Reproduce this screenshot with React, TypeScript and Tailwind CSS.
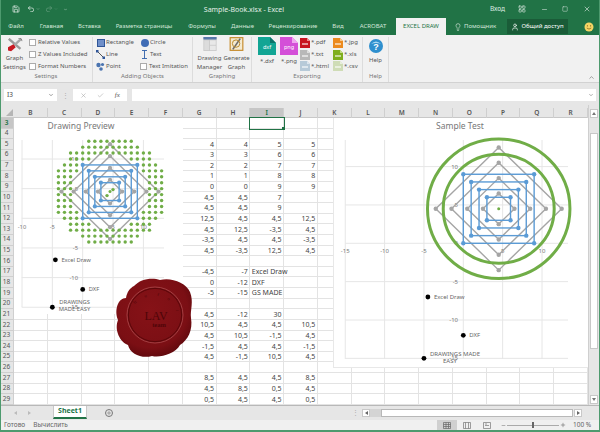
import { Save, Undo2, Redo2, X, Check, Minus, Square, Plus, Lightbulb, User, ChevronUp, ChevronDown, LayoutGrid } from "lucide-react";

const FONT = "font-['Noto_Sans','Open_Sans',sans-serif]";

const tabs = [
    { t: "Файл", c: "w-[32px]" },
    { t: "Главная", c: "w-[39px]" },
    { t: "Вставка", c: "w-[37px]" },
    { t: "Разметка страницы", c: "w-[72px]" },
    { t: "Формулы", c: "w-[44px]" },
    { t: "Данные", c: "w-[37px]" },
    { t: "Рецензирование", c: "w-[64px]" },
    { t: "Вид", c: "w-[26px]" },
    { t: "ACROBAT", c: "w-[44px]" },
];

const cols = ["B", "C", "D", "E", "F", "G", "H", "I", "J", "K", "L", "M", "N", "O", "P", "Q", "R"];

// rows 3..29, columns G H I J
const data: Record<number, string[]> = {
    5: ["4", "4", "5", "5"],
    6: ["3", "3", "6", "6"],
    7: ["2", "2", "7", "7"],
    8: ["1", "1", "8", "8"],
    9: ["0", "0", "9", "9"],
    10: ["4,5", "4,5", "7", ""],
    11: ["4,5", "4,5", "9", ""],
    12: ["12,5", "4,5", "4,5", "12,5"],
    13: ["4,5", "12,5", "-3,5", "4,5"],
    14: ["-3,5", "4,5", "4,5", "-3,5"],
    15: ["4,5", "-3,5", "12,5", "4,5"],
    17: ["-4,5", "-7", "Excel Draw", ""],
    18: ["0", "-12", "DXF", ""],
    19: ["-5", "-15", "GS MADE", ""],
    21: ["4,5", "-12", "30", ""],
    22: ["10,5", "4,5", "4,5", "10,5"],
    23: ["4,5", "10,5", "-1,5", "4,5"],
    24: ["-1,5", "4,5", "4,5", "-1,5"],
    25: ["4,5", "-1,5", "10,5", "4,5"],
    27: ["8,5", "4,5", "4,5", "8,5"],
    28: ["4,5", "8,5", "0,5", "4,5"],
    29: ["0,5", "4,5", "4,5", "0,5"],
};

const rows = Array.from({ length: 27 }, (_, i) => i + 3);

// preview chart plots the circles as whole-number points
const gridDots: [number, number][] = [];
for (let x = -5; x <= 14; x++) {
    for (let y = -5; y <= 14; y++) {
        const d = Math.hypot(x - 4.5, y - 4.5);
        if (d >= 6.5 && d <= 9.25) gridDots.push([x, y]);
    }
}

function CheckItem({ label }: { label: string }) {
    return (
        <div className="flex items-center gap-[2px] h-[12px]">
            <span className="w-[7px] h-[7px] bg-white border border-[#ababab] shrink-0" />
            <span className="text-[6px] text-[#555] whitespace-nowrap">{label}</span>
        </div>
    );
}

function IconItem({ icon, label }: { icon: React.ReactNode; label: string }) {
    return (
        <div className="flex items-center gap-[1px] h-[12px]">
            <span className="w-[9px] h-[9px] flex items-center justify-center shrink-0">{icon}</span>
            <span className="text-[6px] text-[#555] whitespace-nowrap">{label}</span>
        </div>
    );
}

function Group({ className, label, children }: { className: string; label: string; children: React.ReactNode }) {
    return (
        <div className={`flex flex-col h-full border-r border-[#dcdcdc] shrink-0 ${className}`}>
            <div className="flex-1 flex min-h-0">{children}</div>
            <div className="h-[10px] text-center text-[6px] leading-[8px] text-[#777]">{label}</div>
        </div>
    );
}

function FileBig({ color, fold, label }: { color: string; fold: string; label: string }) {
    return (
        <svg width="18" height="18" viewBox="0 0 18 18">
            <path d="M0 0H12L18 6V18H0Z" fill={color} />
            <path d="M12 0L18 6H12Z" fill={fold} />
            <text x="9" y="12" textAnchor="middle" fontSize="5.5" fill="#fff" fontFamily="Noto Sans">{label}</text>
        </svg>
    );
}

function FileSmall({ color, fold }: { color: string; fold: string }) {
    return (
        <svg width="10" height="10" viewBox="0 0 10 10">
            <path d="M0 0H7L10 3V10H0Z" fill={color} />
            <path d="M7 0L10 3H7Z" fill={fold} />
            <rect x="2" y="5" width="6" height="2" fill="#fff" opacity="0.55" />
        </svg>
    );
}

function ExportItem({ color, fold, label }: { color: string; fold: string; label: string }) {
    return (
        <div className="flex items-center gap-[1px] h-[12px]">
            <FileSmall color={color} fold={fold} />
            <span className="text-[6px] text-[#555] whitespace-nowrap">{label}</span>
        </div>
    );
}

type ChartProps = {
    left: number; top: number; width: number; height: number;
    x0: number; y0: number; sx: number; sy: number;
    xl: number; xr: number; yt: number; yb: number;
    gx: number[]; gy: number[];
    xLabelY: number; yLabelX: number;
    title: string; titleX: number;
    dots: boolean; fs: number; r: number;
};

function Chart(p: ChartProps) {
    const X = (v: number) => p.x0 + v * p.sx;
    const Y = (v: number) => p.y0 - v * p.sy;
    const squares = [4.5, 3.5, 2.5, 1.5];
    const diamonds = [8, 6, 4, 2];
    const cx = X(4.5);
    const cy = Y(4.5);
    return (
        <svg
            width={p.width}
            height={p.height}
            viewBox={`${p.left} ${p.top} ${p.width} ${p.height}`}
            className="block"
            fontFamily="Noto Sans"
        >
            <rect x={p.left} y={p.top} width={p.width} height={p.height} fill="#fff" />
            <text x={p.titleX} y={p.top + 10.5} textAnchor="middle" fontSize="8.5" fill="#777">{p.title}</text>
            {p.gx.map((v) => (
                <line key={v} x1={X(v)} x2={X(v)} y1={p.yt} y2={p.yb} stroke="#e6e6e6" strokeWidth="1" />
            ))}
            {p.gy.map((v) => (
                <line key={v} x1={p.xl} x2={p.xr} y1={Y(v)} y2={Y(v)} stroke="#e6e6e6" strokeWidth="1" />
            ))}
            {p.gx.filter((v) => v !== 0).map((v) => (
                <text key={v} x={X(v)} y={p.xLabelY} textAnchor="middle" fontSize={p.fs} fill="#777">{v}</text>
            ))}
            {p.gy.filter((v) => p.dots ? v !== 0 : true).map((v) => (
                <text key={v} x={p.yLabelX} y={Y(v) + 2} textAnchor="end" fontSize={p.fs} fill="#777">{v}</text>
            ))}
            {diamonds.map((d) => (
                <g key={d}>
                    <polygon
                        points={`${X(4.5)},${Y(4.5 + d)} ${X(4.5 + d)},${Y(4.5)} ${X(4.5)},${Y(4.5 - d)} ${X(4.5 - d)},${Y(4.5)}`}
                        fill="none" stroke="#a5a5a5" strokeWidth="1.4"
                    />
                    {[[0, d], [d, 0], [0, -d], [-d, 0]].map(([a, b]) => (
                        <circle key={`${a}_${b}`} cx={X(4.5 + a)} cy={Y(4.5 + b)} r={p.r} fill="#a5a5a5" />
                    ))}
                </g>
            ))}
            {squares.map((s) => (
                <g key={s}>
                    <rect x={X(4.5 - s)} y={Y(4.5 + s)} width={2 * s * p.sx} height={2 * s * p.sy} fill="none" stroke="#5b9bd5" strokeWidth="1.4" />
                    {[[-s, s], [s, s], [s, -s], [-s, -s]].map(([a, b]) => (
                        <circle key={`${a}_${b}`} cx={X(4.5 + a)} cy={Y(4.5 + b)} r={p.r} fill="#5b9bd5" />
                    ))}
                </g>
            ))}
            {p.dots ? (
                gridDots.map(([a, b]) => (
                    <circle key={`${a}_${b}`} cx={X(a)} cy={Y(b)} r="1.7" fill="#70ad47" />
                ))
            ) : (
                <>
                    <ellipse cx={cx} cy={cy} rx={9.05 * p.sx} ry={9.1 * p.sy} fill="none" stroke="#70ad47" strokeWidth="3" />
                    <ellipse cx={cx} cy={cy} rx={7.05 * p.sx} ry={7.1 * p.sy} fill="none" stroke="#70ad47" strokeWidth="3" />
                </>
            )}
            <circle cx={cx} cy={cy} r="1.5" fill="#70ad47" />
            {p.dots && <circle cx={cx - 3} cy={cy + 4} r="1.7" fill="#70ad47" />}
            {p.dots && <circle cx={cx + 3} cy={cy - 2} r="1.7" fill="#70ad47" />}
            <circle cx={X(-4.5)} cy={Y(-7)} r="2.4" fill="#000" />
            <circle cx={X(0)} cy={Y(-12)} r="2.4" fill="#000" />
            <circle cx={X(-5)} cy={Y(-15)} r="2.4" fill="#000" />
            <text x={X(-4.5) + 6} y={Y(-7) + 2} fontSize={p.fs} fill="#666">Excel Draw</text>
            <text x={X(0) + 6} y={Y(-12) + 2} fontSize={p.fs} fill="#666">DXF</text>
            {p.dots ? (
                <>
                    <text x={X(-5) + 7} y={Y(-15) - 3.5} fontSize={p.fs} fill="#666">DRAWINGS</text>
                    <text x={X(-5) + 6.5} y={Y(-15) + 4} fontSize={p.fs} fill="#666">MADE EASY</text>
                </>
            ) : (
                <>
                    <text x={X(-5) + 6} y={Y(-15) - 2} fontSize={p.fs} fill="#666">DRAWINGS MADE</text>
                    <text x={X(-5) + 26} y={Y(-15) + 5} textAnchor="middle" fontSize={p.fs} fill="#666">EASY</text>
                </>
            )}
        </svg>
    );
}

function Seal() {
    return (
        <svg width="80" height="86" viewBox="114 275 80 86" className="block" fontFamily="Liberation Serif">
            <defs>
                <radialGradient id="wax" gradientUnits="userSpaceOnUse" cx="150" cy="310" r="50">
                    <stop offset="0%" stopColor="#861217" />
                    <stop offset="75%" stopColor="#7b0f14" />
                    <stop offset="100%" stopColor="#5c080c" />
                </radialGradient>
            </defs>
            <path
                d="M134 286C140 279 152 277 160 280C170 277 186 282 190 292C194 302 190 310 191 318C193 330 188 340 180 345C175 354 160 358 152 356C142 359 130 354 128 345C120 342 114 330 118 320C114 310 118 298 126 298C127 292 130 288 134 286Z"
                fill="url(#wax)"
            />
            <circle cx="155" cy="315" r="28" fill="none" stroke="#a94a4d" strokeWidth="0.8" />
            <circle cx="155" cy="315" r="26.6" fill="none" stroke="#5a0609" strokeWidth="1" />
            <text x="156" y="320" textAnchor="middle" fontSize="12" fill="#4f0508">LAV</text>
            <text x="159" y="326.5" textAnchor="middle" fontSize="6.5" fontWeight="700" fill="#4f0508">team</text>
            <g fill="#4f0508" fontSize="4.5" textAnchor="middle">
                <text x="136" y="303" transform="rotate(-50 136 303)">fr</text>
                <text x="146" y="297" transform="rotate(-20 146 297)">o</text>
                <text x="158" y="296" transform="rotate(5 158 296)">f</text>
                <text x="168" y="300" transform="rotate(30 168 300)">o</text>
                <text x="176" y="311" transform="rotate(70 176 311)">r</text>
            </g>
        </svg>
    );
}

export default function App() {
    return (
        <div className={`relative w-[600px] h-[432px] overflow-hidden bg-white ${FONT}`}>
            {/* Title bar */}
            <div className="relative h-[18px] bg-[#217346] flex items-center text-white">
                <Save className="ml-[12px] w-[8px] h-[8px] opacity-90" />
                <Undo2 className="ml-[7px] w-[8px] h-[8px] opacity-90" />
                <ChevronDown className="ml-[1px] w-[4px] h-[4px] opacity-70" />
                <Redo2 className="ml-[5px] w-[8px] h-[8px] opacity-30" />
                <ChevronDown className="ml-[1px] w-[4px] h-[4px] opacity-30" />
                <ChevronDown className="ml-[5px] w-[5px] h-[5px] opacity-80" />
                <div className="flex-1 text-center text-[7px] leading-none text-[#e3efe8] -ml-[70px]">Sample-Book.xlsx - Excel</div>
                <span className="text-[6.5px] text-[#dcebe2] mr-[13px]">Вход</span>
                <LayoutGrid className="w-[8px] h-[8px] mr-[15px] opacity-80" />
                <Minus className="w-[7px] h-[7px] mr-[14px] opacity-80" />
                <Square className="w-[6px] h-[6px] mr-[15px] opacity-80" />
                <X className="w-[8px] h-[8px] mr-[9px] opacity-80" />
            </div>

            {/* Tabs */}
            <div className="h-[17px] bg-[#217346] flex items-stretch text-[6px] text-[#d3e6da]">
                {tabs.map((t) => (
                    <div key={t.t} className={`${t.c} flex items-center justify-center whitespace-nowrap`}>{t.t}</div>
                ))}
                <div className="ml-[1px] w-[50px] bg-[#f1f1f1] text-[#217346] flex items-center justify-center whitespace-nowrap">EXCEL DRAW</div>
                <div className="flex items-center ml-[8px] w-[53px]">
                    <Lightbulb className="w-[8px] h-[8px] mr-[2px]" />
                    <span>Помощник</span>
                </div>
                <div className="my-[1px] w-[61px] bg-[#1a5c38] flex items-center justify-center whitespace-nowrap text-white">
                    <User className="w-[8px] h-[8px] mr-[2px]" />
                    Общий доступ
                </div>
                <div className="ml-[16px] flex items-center">
                    <svg width="10" height="10" viewBox="0 0 10 10">
                        <circle cx="5" cy="5" r="4.5" fill="#f5d565" />
                        <circle cx="3.4" cy="3.8" r="0.6" fill="#7a5b12" />
                        <circle cx="6.6" cy="3.8" r="0.6" fill="#7a5b12" />
                        <path d="M2.8 6Q5 8.2 7.2 6" fill="none" stroke="#7a5b12" strokeWidth="0.7" />
                    </svg>
                </div>
            </div>

            {/* Ribbon */}
            <div className="relative h-[48px] bg-[#f1f1f1] border-b border-[#d2d2d2] flex items-stretch pt-[2px]">
                <Group className="w-[93px]" label="Settings">
                    <div className="w-[29px] flex flex-col items-center text-[6px] leading-[9px] text-[#555]">
                        <svg width="20" height="18" viewBox="0 0 20 18" className="mt-[1px] mb-[2px]">
                            <path d="M2 1L17 14" stroke="#9a9a9a" strokeWidth="3" />
                            <path d="M18 1L7 11" stroke="#a8a8a8" strokeWidth="3" />
                            <path d="M1 12L8 8L11 12L5 17L1 16Z" fill="#c81a22" />
                            <path d="M14 0L18 1L19 4" fill="none" stroke="#777" strokeWidth="1" />
                        </svg>
                        <span>Graph</span>
                        <span>Settings</span>
                    </div>
                    <div className="flex flex-col">
                        <CheckItem label="Relative Values" />
                        <CheckItem label="Z Values Included" />
                        <CheckItem label="Format Numbers" />
                    </div>
                </Group>
                <Group className="w-[100px]" label="Adding Objects">
                    <div className="flex pl-[3px]">
                        <div className="w-[44px] flex flex-col">
                            <IconItem label="Rectangle" icon={<span className="block w-[8px] h-[8px] bg-[#6f8fc9] border border-[#2f5597]" />} />
                            <IconItem label="Line" icon={
                                <svg width="9" height="9" viewBox="0 0 9 9">
                                    <path d="M1 1L8 8" stroke="#555" strokeWidth="1" />
                                    <rect x="0" y="0" width="2.5" height="2.5" fill="#2f5597" />
                                    <rect x="6.5" y="6.5" width="2.5" height="2.5" fill="#2f5597" />
                                </svg>
                            } />
                            <IconItem label="Point" icon={
                                <svg width="9" height="9" viewBox="0 0 9 9" fill="#4a74b0">
                                    <circle cx="2.5" cy="3" r="2.2" />
                                    <circle cx="6.5" cy="2.5" r="1.6" />
                                    <circle cx="5" cy="7" r="1.8" />
                                </svg>
                            } />
                        </div>
                        <div className="flex flex-col">
                            <IconItem label="Circle" icon={<span className="block w-[8px] h-[8px] rounded-full bg-[#3f6cb5]" />} />
                            <IconItem label="Text" icon={
                                <svg width="9" height="9" viewBox="0 0 9 9" fill="none" stroke="#2f5fa8" strokeWidth="0.9">
                                    <path d="M2 0.5H7M2 8.5H7M4.5 0.5V8.5" />
                                </svg>
                            } />
                            <CheckItem label="Text Imitation" />
                        </div>
                    </div>
                </Group>
                <Group className="w-[59px]" label="Graphing">
                    <div className="flex pl-[3px] text-[6px] leading-[9px] text-[#555] text-center">
                        <div className="w-[27px] flex flex-col items-center">
                            <svg width="16" height="17" viewBox="0 0 16 17" className="mb-[3px]">
                                <rect width="16" height="17" fill="#c9c9c9" />
                                <rect width="16" height="3" fill="#5677a8" />
                                <rect x="1" y="4" width="6" height="12" fill="#dcdcdc" />
                                <rect x="8" y="4" width="7" height="5.5" fill="#e8e8e8" />
                                <rect x="8" y="10.5" width="7" height="5.5" fill="#e8e8e8" />
                            </svg>
                            <span>Drawing</span>
                            <span>Manager</span>
                        </div>
                        <div className="w-[27px] flex flex-col items-center">
                            <svg width="17" height="17" viewBox="0 0 17 17" className="mb-[3px]">
                                <rect x="0.8" y="0.8" width="15.4" height="15.4" fill="#f4ead0" stroke="#c58a2a" strokeWidth="1.4" />
                                <path d="M4 15L13 2" stroke="#6a6a6a" strokeWidth="2" />
                                <circle cx="8" cy="8" r="4.5" fill="none" stroke="#b8892c" strokeWidth="1.2" />
                            </svg>
                            <span>Generate</span>
                            <span>Graph</span>
                        </div>
                    </div>
                </Group>
                <Group className="w-[111px]" label="Exporting">
                    <div className="flex pl-[6px] text-[6px] text-[#555]">
                        <div className="w-[22px] flex flex-col">
                            <FileBig color="#12a594" fold="#0b7368" label="dxf" />
                            <span className="mt-[2px] w-[18px] text-center">*.dxf</span>
                        </div>
                        <div className="w-[20px] flex flex-col">
                            <FileBig color="#d44fd8" fold="#f0a4f0" label="png" />
                            <span className="mt-[2px] w-[18px] text-center">*.png</span>
                        </div>
                        <div className="w-[33px] flex flex-col">
                            <ExportItem color="#c8141e" fold="#f08a8a" label="*.pdf" />
                            <ExportItem color="#b8b8b8" fold="#dedede" label="*.txt" />
                            <ExportItem color="#b7cad8" fold="#dce6ee" label="*.html" />
                        </div>
                        <div className="flex flex-col">
                            <ExportItem color="#ec8a1e" fold="#f8c88a" label="*.jpg" />
                            <ExportItem color="#7fae1e" fold="#c4dc84" label="*.xls" />
                            <ExportItem color="#cfdcb6" fold="#e8eedc" label="*.csv" />
                        </div>
                    </div>
                </Group>
                <Group className="w-[26px]" label="Help">
                    <div className="w-full flex flex-col items-center text-[6px] text-[#555]">
                        <svg width="14" height="14" viewBox="0 0 14 14" className="mt-[2px] mb-[3px]">
                            <circle cx="7" cy="7" r="7" fill="#2e8fce" />
                            <path d="M2 5Q7 0 12 5Q7 3 2 5Z" fill="#a7d8f2" />
                            <text x="7" y="10.5" textAnchor="middle" fontSize="9" fontWeight="700" fill="#fff" fontFamily="Liberation Sans">?</text>
                        </svg>
                        <span>Help</span>
                    </div>
                </Group>
                <ChevronUp className="absolute right-[5px] bottom-[1px] w-[7px] h-[7px] text-[#666]" />
            </div>

            {/* Formula bar */}
            <div className="h-[22px] bg-[#e6e6e6] flex items-center pl-[4px] pr-[4px] pt-[2px]">
                <div className="w-[53px] h-[12px] bg-white flex items-center justify-between px-[3px] text-[6.5px] text-[#444]">
                    <span>I3</span>
                    <ChevronDown className="w-[6px] h-[6px]" />
                </div>
                <div className="w-[16px] text-center text-[7px] leading-none text-[#aaa]">⋮</div>
                <div className="w-[54px] h-[12px] bg-white flex items-center justify-around px-[2px] text-[#aaa]">
                    <X className="w-[7px] h-[7px]" />
                    <Check className="w-[7px] h-[7px]" />
                    <span className="font-['Liberation_Serif',serif] italic text-[7px] text-[#555]">fx</span>
                </div>
                <div className="ml-[5px] flex-1 h-[12px] bg-white flex items-center justify-end pr-[2px]">
                    <ChevronDown className="w-[6px] h-[6px] text-[#666]" />
                </div>
            </div>

            {/* Sheet */}
            <div className="h-[300px] flex">
                <div className="w-[588px]">
                    <div className="h-[13px] flex bg-[#e6e6e6] border-b border-[#c8c8c8] pt-[3px]">
                        <div className="w-[14px] shrink-0 flex items-end justify-end">
                            <span className="w-0 h-0 border-l-[7px] border-l-transparent border-b-[7px] border-b-[#b5b5b5] mr-[1px] mb-[1px]" />
                        </div>
                        <div className="flex-1 grid grid-cols-[repeat(17,1fr)]">
                            {cols.map((c) => (
                                <div key={c} className={`flex items-center justify-center text-[6.5px] font-semibold border-r border-[#cfcfcf] ${c === "I" ? "bg-[#c6c6c6] text-[#217346]" : "text-[#555]"}`}>{c}</div>
                            ))}
                        </div>
                    </div>
                    <div className="h-[287px] grid grid-rows-[repeat(27,1fr)]">
                        {rows.map((r) => (
                            <div key={r} className="flex min-h-0">
                                <div className={`w-[14px] shrink-0 flex items-center justify-center text-[6.5px] leading-none border-b border-r border-[#cfcfcf] ${r === 3 ? "bg-[#c6c6c6] text-[#217346] font-semibold" : "bg-[#e6e6e6] text-[#555]"}`}>{r}</div>
                                <div className="flex-1 grid grid-cols-[repeat(17,1fr)]">
                                    {cols.map((c, i) => {
                                        const v = i >= 5 && i <= 8 ? (data[r] ?? [])[i - 5] ?? "" : "";
                                        const isText = /[A-Z]/.test(v);
                                        const selected = r === 3 && c === "I";
                                        return (
                                            <div
                                                key={c}
                                                className={`relative min-w-0 border-b border-r border-[#e3e3e3] flex items-center text-[7px] leading-none text-[#444] px-[1.5px] whitespace-nowrap ${isText ? "justify-start" : "justify-end"} ${selected ? "outline-[1.5px] outline-solid outline-[#217346] z-[1]" : ""}`}
                                            >
                                                {v}
                                                {selected && <span className="absolute -right-[2px] -bottom-[2px] w-[3px] h-[3px] bg-[#217346]" />}
                                            </div>
                                        );
                                    })}
                                </div>
                            </div>
                        ))}
                    </div>
                </div>
                {/* Vertical scrollbar */}
                <div className="flex-1 bg-[#e6e6e6] flex flex-col items-center pt-[4px] pr-[2px] border-l border-[#cfcfcf]">
                    <div className="w-[8px] h-[9px] bg-white border border-[#c8c8c8] flex items-center justify-center">
                        <span className="w-0 h-0 border-x-[2px] border-x-transparent border-b-[3px] border-b-[#777]" />
                    </div>
                    <div className="mt-[15px] w-[8px] h-[216px] bg-white border border-[#c8c8c8]" />
                    <div className="mt-auto mb-[1px] w-[8px] h-[9px] bg-white border border-[#c8c8c8] flex items-center justify-center">
                        <span className="w-0 h-0 border-x-[2px] border-x-transparent border-t-[3px] border-t-[#777]" />
                    </div>
                </div>
            </div>

            {/* Sheet tabs + horizontal scrollbar */}
            <div className="h-[15px] bg-[#e6e6e6] border-t border-[#b8b8b8] flex items-stretch">
                <div className="w-[53px] flex items-center pl-[14px] gap-[11px]">
                    <span className="w-0 h-0 border-y-[2px] border-y-transparent border-r-[3px] border-r-[#bbb]" />
                    <span className="w-0 h-0 border-y-[2px] border-y-transparent border-l-[3px] border-l-[#bbb]" />
                </div>
                <div className="w-[34px] h-[13px] bg-white border-x border-b-2 border-x-[#c8c8c8] border-b-[#217346] text-[#217346] text-[7px] font-bold flex items-center justify-center">Sheet1</div>
                <div className="ml-[18px] w-[8px] flex items-center">
                    <span className="w-[8px] h-[8px] rounded-full border border-[#777] flex items-center justify-center">
                        <Plus className="w-[6px] h-[6px] text-[#666]" />
                    </span>
                </div>
                <div className="w-[247px] text-right text-[7px] leading-[13px] text-[#aaa] pr-[1px]">⋮</div>
                <div className="ml-[2px] flex items-center">
                    <div className="w-[8px] h-[8px] bg-white border border-[#c8c8c8] flex items-center justify-center">
                        <span className="w-0 h-0 border-y-[2px] border-y-transparent border-r-[3px] border-r-[#666]" />
                    </div>
                    <div className="w-[11px] h-[8px] bg-[#d4d4d4]" />
                    <div className="w-[192px] h-[8px] bg-white border border-[#b8b8b8]" />
                    <div className="ml-[1px] w-[8px] h-[8px] bg-white border border-[#c8c8c8] flex items-center justify-center">
                        <span className="w-0 h-0 border-y-[2px] border-y-transparent border-l-[3px] border-l-[#666]" />
                    </div>
                </div>
            </div>

            {/* Status bar */}
            <div className="h-[12px] bg-[#f0f0f0] flex items-center text-[6.5px] text-[#666] pb-[2px]">
                <span className="ml-[4px]">Готово</span>
                <span className="ml-[8px]">Вычислить</span>
                <div className="ml-auto flex items-center h-full">
                    <div className="w-[20px] h-full bg-[#d0d0d0] flex items-center justify-center">
                        <svg width="8" height="7" viewBox="0 0 8 7" fill="none" stroke="#666" strokeWidth="0.7">
                            <path d="M0.5 0.5H7.5V6.5H0.5ZM0.5 2.5H7.5M0.5 4.5H7.5M3 0.5V6.5M5.5 0.5V6.5" />
                        </svg>
                    </div>
                    <div className="w-[20px] h-full flex items-center justify-center">
                        <svg width="8" height="7" viewBox="0 0 8 7" fill="none" stroke="#777" strokeWidth="0.7">
                            <path d="M0.5 0.5H7.5V6.5H0.5ZM2.5 0.5V6.5M5.5 0.5V6.5" />
                        </svg>
                    </div>
                    <div className="w-[20px] h-full flex items-center justify-center">
                        <svg width="8" height="7" viewBox="0 0 8 7" fill="none" stroke="#777" strokeWidth="0.7">
                            <path d="M0.5 0.5H7.5V6.5H0.5ZM2 3.5H6M2 2H4" />
                        </svg>
                    </div>
                    <Minus className="ml-[4px] w-[5px] h-[5px] text-[#555]" />
                    <div className="relative mx-[1px] w-[52px] h-px bg-[#aaa]">
                        <span className="absolute left-[25px] -top-[2.5px] w-[2px] h-[6px] bg-[#666]" />
                    </div>
                    <Plus className="w-[6px] h-[6px] text-[#555]" />
                    <span className="ml-[7px] mr-[10px] w-[17px] whitespace-nowrap">100 %</span>
                </div>
            </div>

            {/* Charts and seal float over the sheet */}
            <div className="absolute left-[14px] top-[118px]">
                <Chart
                    left={14} top={118} width={169} height={196}
                    x0={82.7} y0={218.3} sx={6.07} sy={5.93}
                    xl={21.7} xr={164} yt={140} yb={307}
                    gx={[-10, -5, 0, 5, 10]} gy={[10, 5, 0, -5, -10, -15]}
                    xLabelY={229} yLabelX={78}
                    title="Drawing Preview" titleX={81}
                    dots fs={5.8} r={2.1}
                />
            </div>
            <div className="absolute left-[333px] top-[118px] border-l border-b border-[#e8e8e8]">
                <Chart
                    left={334} top={118} width={254} height={249}
                    x0={463.3} y0={243.3} sx={7.87} sy={7.67}
                    xl={345.3} xr={568} yt={140} yb={359}
                    gx={[-15, -10, -5, 0, 5, 10]} gy={[10, 5, 0, -5, -10, -15]}
                    xLabelY={253} yLabelX={458}
                    title="Sample Test" titleX={460}
                    dots={false} fs={6} r={2.2}
                />
            </div>
            <div className="absolute left-[114px] top-[275px]">
                <Seal />
            </div>

            {/* Window border */}
            <div className="absolute inset-0 border-x border-b-2 border-[#4d9a6e] pointer-events-none" />
        </div>
    );
}
